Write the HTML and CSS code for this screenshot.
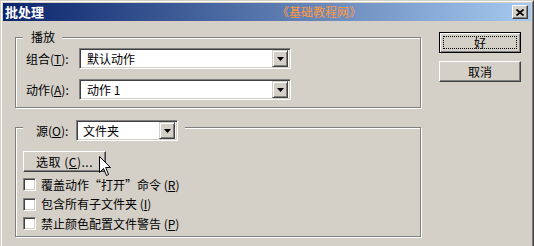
FILE: index.html
```html
<!DOCTYPE html>
<html>
<head>
<meta charset="utf-8">
<link rel="stylesheet" href="styles.css">
</head>
<body>
<div class="window">
  <div class="frame">
    <div class="titlebar">
      <span class="title">批处理</span>
      <span class="watermark">《基础教程网》</span>
      <span class="close"><svg width="8" height="7" viewBox="0 0 8 7"><path d="M0.5 0.5 L7.5 6.5 M7.5 0.5 L0.5 6.5" stroke="#000" stroke-width="1.7" fill="none"/></svg></span>
    </div>
    <div class="content">
      <div class="left">
        <div class="group g1">
          <div class="legend legend1">播放</div>
          <div class="row">
            <span class="lbl">组合(<u>T</u>):</span>
            <div class="combo wide"><span class="val">默认动作</span><span class="drop"><svg width="7" height="4" viewBox="0 0 7 4"><path d="M0 0 H7 L3.5 4 Z" fill="#000"/></svg></span></div>
          </div>
          <div class="row r2">
            <span class="lbl">动作(<u>A</u>):</span>
            <div class="combo wide"><span class="val">动作 1</span><span class="drop"><svg width="7" height="4" viewBox="0 0 7 4"><path d="M0 0 H7 L3.5 4 Z" fill="#000"/></svg></span></div>
          </div>
        </div>
        <div class="group g2">
          <div class="legend legend2">
            <span class="lbl2">源(<u>O</u>):</span>
            <div class="combo narrow"><span class="val val2">文件夹</span><span class="drop"><svg width="7" height="4" viewBox="0 0 7 4"><path d="M0 0 H7 L3.5 4 Z" fill="#000"/></svg></span></div>
          </div>
          <div class="btnwrap">
            <div class="btn choose">选取 (<u>C</u>)...</div>
            <svg class="cursor" width="12" height="20" viewBox="0 0 12 20"><path d="M0.5 0.5 L0.5 16.5 L4.5 12.5 L7.5 19.5 L9.5 18.5 L6.7 11.5 L11.5 11.5 Z" fill="#fff" stroke="#000" stroke-width="1" stroke-linejoin="miter"/></svg>
          </div>
          <div class="checks">
            <div class="check"><span class="box"></span><span>覆盖动作“打开”命令 (<u>R</u>)</span></div>
            <div class="check"><span class="box"></span><span>包含所有子文件夹 (<u>I</u>)</span></div>
            <div class="check"><span class="box"></span><span>禁止颜色配置文件警告 (<u>P</u>)</span></div>
          </div>
        </div>
      </div>
      <div class="right">
        <div class="btn ok"><span class="focus">好</span></div>
        <div class="btn cancel">取消</div>
      </div>
    </div>
  </div>
</div>
</body>
</html>
```
FILE: styles.css
```css
* { box-sizing: border-box; }
html, body { margin: 0; padding: 0; background: #d4d0c8; overflow: hidden; }
body {
  width: 534px; height: 246px;
  font-family: "Noto Sans CJK SC", "Liberation Sans", sans-serif;
  font-size: 12px; color: #000;
}
.window {
  width: 534px; height: 246px;
  border: 1px solid; border-bottom-width: 0;
  border-color: #d4d0c8 #404040 #404040 #d4d0c8;
}
.frame {
  height: 100%;
  border: 1px solid; border-bottom-width: 0;
  border-color: #fff #808080 #808080 #fff;
  padding: 1px;
}
.titlebar {
  height: 18px; display: flex; align-items: center;
  padding: 0 3px 0 2px;
  background: linear-gradient(to right, #0a246a, #a6caf0);
}
.title { width: 272px; color: #fff; font-weight: bold; font-size: 13px; line-height: 18px; }
.watermark { color: #ff9a40; font-size: 12px; line-height: 18px; }
.close {
  margin-left: auto; width: 16px; height: 14px; background: #d4d0c8;
  border: 1px solid; border-color: #fff #404040 #404040 #fff;
  box-shadow: inset -1px -1px #808080;
  display: flex; align-items: center; justify-content: center;
}
.close svg { display: block; }
.content { display: flex; align-items: flex-start; padding-left: 12px; }
.left { padding-top: 16px; }
.right { margin-left: 18px; padding-top: 11px; }
.group {
  position: relative; width: 406px;
  border: 1px solid #808080;
  box-shadow: inset 1px 1px #fff, 1px 1px #fff;
}
.g1 { height: 71px; padding: 10px 0 0 10px; }
.g2 { height: 110px; padding: 23px 0 0 7px; margin-top: 19px; }
.legend { position: absolute; background: #d4d0c8; white-space: nowrap; }
.legend1 { left: 7px; top: -9px; padding: 0 7px 0 8px; line-height: 16px; }
.legend2 { left: 7px; top: -8px; display: flex; align-items: center; padding: 0 7px 0 13px; }
.lbl2 { width: 40px; white-space: nowrap; }
.row { display: flex; align-items: center; height: 21px; }
.r2 { margin-top: 10px; }
.lbl { width: 53px; white-space: nowrap; }
.combo {
  height: 21px; background: #fff;
  border: 1px solid; border-color: #808080 #fff #fff #808080;
  box-shadow: inset 1px 1px #404040, inset -1px -1px #d4d0c8;
  display: flex; align-items: center; padding: 2px;
}
.wide { width: 212px; }
.narrow { width: 102px; }
.val { flex: 1; padding-left: 5px; line-height: 17px; white-space: nowrap; }
.val2 { padding-left: 4px; }
.drop {
  width: 16px; height: 17px; background: #d4d0c8;
  border: 1px solid; border-color: #d4d0c8 #404040 #404040 #d4d0c8;
  box-shadow: inset 1px 1px #fff, inset -1px -1px #808080;
  display: flex; align-items: center; justify-content: center;
}
.drop svg { display: block; }
.btn {
  height: 21px; background: #d4d0c8;
  border: 1px solid; border-color: #fff #404040 #404040 #fff;
  box-shadow: inset -1px -1px #808080;
  display: flex; align-items: center; justify-content: center;
  line-height: 16px; white-space: nowrap;
}
.btnwrap { position: relative; width: 83px; height: 21px; }
.choose { width: 83px; letter-spacing: 0.5px; }
.cursor { position: absolute; left: 76px; top: 5px; display: block; }
.checks { margin-top: 3px; }
.check { display: flex; align-items: center; height: 19.5px; line-height: 16px; white-space: nowrap; }
.box {
  width: 13px; height: 13px; background: #fff; flex: none;
  border: 1px solid; border-color: #808080 #fff #fff #808080;
  box-shadow: inset 1px 1px #404040, inset -1px -1px #d4d0c8;
  margin-right: 5px;
}
.right .btn { width: 82px; }
.ok {
  border-color: #000; padding: 3px;
  box-shadow: inset 1px 1px #fff, inset -1px -1px #808080;
}
.focus {
  width: 100%; height: 100%; border: 1px dotted #000;
  display: flex; align-items: center; justify-content: center;
}
.cancel { margin-top: 8px; }
```
